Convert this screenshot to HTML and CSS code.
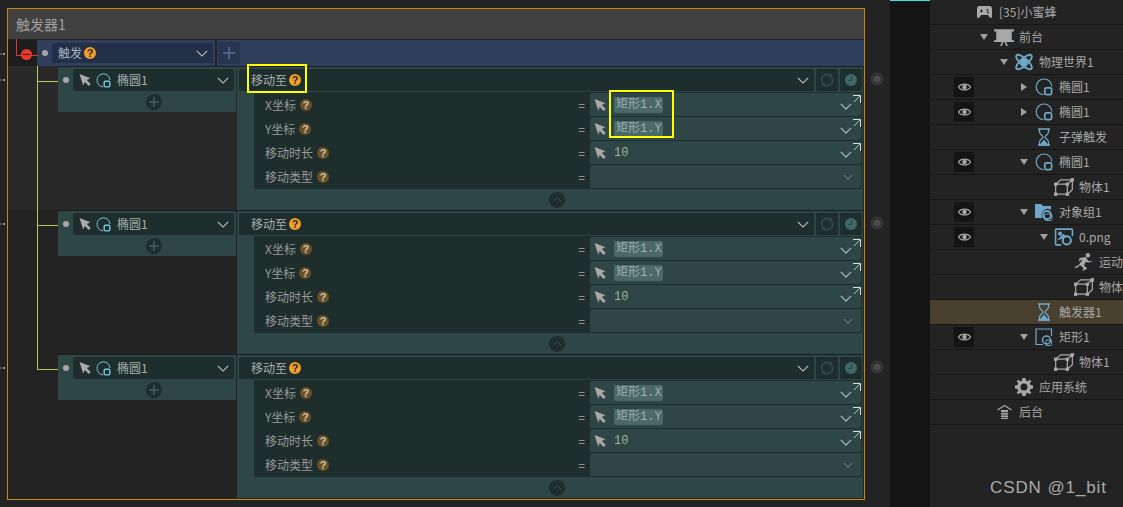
FILE: index.html
```html
<!DOCTYPE html>
<html lang="zh">
<head>
<meta charset="utf-8">
<title>触发器1</title>
<link rel="stylesheet" href="styles.css">
</head>
<body>
<svg class="defs" width="0" height="0" aria-hidden="true">
  <symbol id="cursor" viewBox="0 0 14 14"><path d="M1.5 1 12.5 5.2 8.8 6.9 12.8 11 10.8 13 6.8 8.9 5.2 12.5Z" fill="currentColor"/></symbol>
  <symbol id="chev" viewBox="0 0 14 8"><path d="M1 1 7 7 13 1" fill="none" stroke="currentColor" stroke-width="1.2"/></symbol>
  <symbol id="ellipse" viewBox="0 0 18 18"><path d="M8.5 16.6A7.8 7.8 0 1 1 16.8 8.5" fill="none" stroke="currentColor" stroke-width="1.2"/><rect x="9.8" y="9.8" width="6.8" height="6.8" rx="1.6" fill="none" stroke="currentColor" stroke-width="1.7"/></symbol>
  <symbol id="plus" viewBox="0 0 12 12"><path d="M6 0V12M0 6H12" stroke="currentColor" stroke-width="2"/></symbol>
  <symbol id="expand" viewBox="0 0 8 8"><path d="M0 .5H7.5V8" fill="none" stroke="currentColor" stroke-width="1"/><path d="M7 1 1 7" stroke="currentColor" stroke-width="1" opacity=".8"/></symbol>
  <symbol id="loop" viewBox="0 0 14 14"><path d="M2 9A5.5 5.5 0 0 1 11 3M12 5A5.5 5.5 0 0 1 3 11" fill="none" stroke="currentColor" stroke-width="1.5"/><path d="M10 0 13 4 9 4.5ZM4 14 1 10 5 9.5Z" fill="currentColor"/></symbol>
  <symbol id="clock" viewBox="0 0 12 12"><circle cx="6" cy="6" r="6" fill="currentColor"/><path d="M6.500 2.500V6.500H3.500" fill="none" stroke="#2a4846" stroke-width="1.200"/></symbol>
  <symbol id="eye" viewBox="0 0 14 10"><path d="M.5 5C3 .8 11 .8 13.5 5 11 9.2 3 9.2.5 5Z" fill="none" stroke="currentColor" stroke-width="1.4"/><circle cx="7" cy="5" r="2.400" fill="currentColor"/></symbol>
  <symbol id="glass" viewBox="0 0 20 18"><g transform="translate(3)"><path d="M1 1H13M1 17H13" stroke="currentColor" stroke-width="1.600"/><path d="M2.500 1V4C2.500 6.500 6 7.500 6 9 6 10.500 2.500 11.500 2.500 14V17H11.500V14C11.500 11.500 8 10.500 8 9 8 7.500 11.500 6.500 11.500 4V1" fill="none" stroke="currentColor" stroke-width="1.300"/><path d="M3 16.500 7 11.500 11 16.500Z" fill="currentColor"/></g></symbol>
  <symbol id="cube" viewBox="0 0 18 16"><path d="M1.500 5.500H12V14.500H1.500ZM1.500 5.500 6 1.500H16.500V10.500L12 14.500M12 5.500 16.500 1.500" fill="none" stroke="currentColor" stroke-width="1.100"/><g fill="currentColor"><rect y="4" width="3" height="3"/><rect x="10.500" y="4" width="3" height="3"/><rect y="13" width="3" height="3"/><rect x="10.500" y="13" width="3" height="3"/><rect x="15" width="3" height="3"/></g></symbol>
  <symbol id="pad" viewBox="0 0 15 12"><path d="M2.500 0H12.500Q15 0 15 3V10.500Q15 12 13.500 12 12.500 12 11 9H4Q2.500 12 1.500 12 0 12 0 10.500V3Q0 0 2.500 0Z" fill="currentColor"/><path d="M3 5H6M4.500 3.500V6.500" stroke="#232323" stroke-width="1"/><circle cx="10.500" cy="4" r=".9" fill="#232323"/><circle cx="11" cy="6.500" r=".9" fill="#232323"/></symbol>
  <symbol id="stage" viewBox="0 0 18 16"><path d="M0 1H18V3H16V11H18V12.500H11L12.500 16H11L9.500 12.500H8.500L7 16H5.500L7 12.500H0V11H2V3H0Z" fill="currentColor"/></symbol>
  <symbol id="world" viewBox="0 0 18 18"><ellipse cx="9" cy="9" rx="10" ry="3.600" transform="rotate(42 9 9)" fill="none" stroke="currentColor" stroke-width="1.900"/><ellipse cx="9" cy="9" rx="10" ry="3.600" transform="rotate(-42 9 9)" fill="none" stroke="currentColor" stroke-width="1.900"/><circle cx="9" cy="9" r="3.500" fill="currentColor"/></symbol>
  <symbol id="group" viewBox="0 0 18 18"><path d="M0 1H6L8 3H16V7A6 6 0 0 0 7.500 15H0Z" fill="currentColor"/><circle cx="12" cy="12" r="4" fill="none" stroke="currentColor" stroke-width="1.800"/><rect x="9.500" y="11" width="7.500" height="6.500" rx="2" fill="none" stroke="currentColor" stroke-width="1"/></symbol>
  <symbol id="image" viewBox="0 0 17 16"><path d="M6 15H2Q1 15 1 14V2Q1 1 2 1H15Q16 1 16 2V7" fill="none" stroke="currentColor" stroke-width="1.400"/><circle cx="5" cy="5" r="1.800" fill="currentColor"/><path d="M2 11 8 5 11 8Z" fill="currentColor"/><circle cx="11" cy="11" r="3.600" fill="none" stroke="currentColor" stroke-width="1.800"/></symbol>
  <symbol id="run" viewBox="0 0 18 16"><circle cx="12.500" cy="2" r="2" fill="currentColor"/><path d="M5 4.500 10.500 3.500 13 7 17.500 7.500 13 8.500 10.500 8 9 11 12 14 7.500 16 8.500 13.500 5.500 11 2.500 13.500 0 13 4.500 10.500 7.500 6 5.500 6.500 4 8Z" fill="currentColor"/></symbol>
  <symbol id="rect" viewBox="0 0 18 18"><path d="M8 16.500H1V1H16.500V8" fill="none" stroke="currentColor" stroke-width="1.200"/><circle cx="11.500" cy="12" r="4" fill="none" stroke="currentColor" stroke-width="1.500"/><rect x="11" y="12" width="5.500" height="5.500" rx="1" fill="none" stroke="currentColor" stroke-width="1"/></symbol>
  <symbol id="gear" viewBox="0 0 18 18"><path d="M7.400 0H10.600L11 2.500 12.700 3.200 14.800 1.700 16.300 3.200 14.800 5.300 15.500 7 18 7.400V10.600L15.500 11 14.800 12.700 16.300 14.800 14.800 16.300 12.700 14.800 11 15.500 10.600 18H7.400L7 15.500 5.300 14.800 3.200 16.300 1.700 14.800 3.200 12.700 2.500 11 0 10.600V7.400L2.500 7 3.200 5.300 1.700 3.200 3.200 1.700 5.300 3.200 7 2.500ZM9 5.500A3.500 3.500 0 1 0 9 12.500 3.500 3.500 0 1 0 9 5.500Z" fill="currentColor" fill-rule="evenodd"/></symbol>
  <symbol id="back" viewBox="0 0 15 14"><path d="M.5 5 7.500.5 14.500 5" fill="none" stroke="currentColor" stroke-width="1.200"/><path d="M4 5H11V14H4Z" fill="currentColor"/><path d="M4 7.500H11M4 10H11M4 12.500H11" stroke="#232323" stroke-width=".8"/></symbol>
  <symbol id="knob" viewBox="0 0 14 14"><circle cx="7" cy="7" r="5.500" fill="none" stroke="#3c3c3c" stroke-width="1.500"/><circle cx="7" cy="7" r="3.800" fill="#4c4c4c"/></symbol>
</svg>

<div class="app">
  <main class="editor">
    <section class="panel">
      <header class="panel-head">触发器1</header>

      <div class="trigger-row">
        <div class="gutter"><span class="stop"></span></div>
        <div class="trigger-bar">
          <span class="dot"></span>
          <div class="select select-blue">
            <span class="txt">触发</span><span class="q">?</span>
            <svg class="chev"><use href="#chev"/></svg>
          </div>
          <span class="bar-sep"></span>
          <button class="add-blue"><svg class="plus"><use href="#plus"/></svg></button>
        </div>
      </div>

      <div class="action first">
        <div class="wire"></div>
        <div class="target">
          <div class="target-top">
            <span class="dot"></span>
            <div class="select">
              <svg class="cur"><use href="#cursor"/></svg>
              <svg class="ell"><use href="#ellipse"/></svg>
              <span class="txt">椭圆1</span>
              <svg class="chev"><use href="#chev"/></svg>
            </div>
          </div>
          <div class="round"><svg class="plus-s"><use href="#plus"/></svg></div>
        </div>
        <div class="body">
          <div class="body-head">
            <div class="select head-sel"><span class="txt">移动至</span><span class="q">?</span><svg class="chev"><use href="#chev"/></svg></div>
            <div class="tool"><svg class="ico-loop"><use href="#loop"/></svg></div>
            <div class="tool"><svg class="ico-clock"><use href="#clock"/></svg></div>
          </div>
          <div class="params">
            <div class="param"><span class="pname">X坐标</span><span class="q q-dim">?</span><span class="eq">=</span>
              <div class="field"><svg class="cur"><use href="#cursor"/></svg><span class="code">矩形1.X</span><svg class="chev"><use href="#chev"/></svg><svg class="expand"><use href="#expand"/></svg></div></div>
            <div class="param"><span class="pname">Y坐标</span><span class="q q-dim">?</span><span class="eq">=</span>
              <div class="field"><svg class="cur"><use href="#cursor"/></svg><span class="code">矩形1.Y</span><svg class="chev"><use href="#chev"/></svg><svg class="expand"><use href="#expand"/></svg></div></div>
            <div class="param"><span class="pname">移动时长</span><span class="q q-dim">?</span><span class="eq">=</span>
              <div class="field"><svg class="cur"><use href="#cursor"/></svg><span class="num">10</span><svg class="chev"><use href="#chev"/></svg><svg class="expand"><use href="#expand"/></svg></div></div>
            <div class="param"><span class="pname">移动类型</span><span class="q q-dim">?</span><span class="eq">=</span>
              <div class="field"><svg class="chev chev-s"><use href="#chev"/></svg></div></div>
          </div>
          <div class="collapse"><span class="round"><svg class="chev-up"><use href="#chev"/></svg></span></div>
        </div>
        <svg class="knob"><use href="#knob"/></svg>
        <span class="mark"></span>
        <span class="mark mark-top"></span>
      </div>

      <div class="action">
        <div class="wire"></div>
        <div class="target">
          <div class="target-top">
            <span class="dot"></span>
            <div class="select">
              <svg class="cur"><use href="#cursor"/></svg>
              <svg class="ell"><use href="#ellipse"/></svg>
              <span class="txt">椭圆1</span>
              <svg class="chev"><use href="#chev"/></svg>
            </div>
          </div>
          <div class="round"><svg class="plus-s"><use href="#plus"/></svg></div>
        </div>
        <div class="body">
          <div class="body-head">
            <div class="select head-sel"><span class="txt">移动至</span><span class="q">?</span><svg class="chev"><use href="#chev"/></svg></div>
            <div class="tool"><svg class="ico-loop"><use href="#loop"/></svg></div>
            <div class="tool"><svg class="ico-clock"><use href="#clock"/></svg></div>
          </div>
          <div class="params">
            <div class="param"><span class="pname">X坐标</span><span class="q q-dim">?</span><span class="eq">=</span>
              <div class="field"><svg class="cur"><use href="#cursor"/></svg><span class="code">矩形1.X</span><svg class="chev"><use href="#chev"/></svg><svg class="expand"><use href="#expand"/></svg></div></div>
            <div class="param"><span class="pname">Y坐标</span><span class="q q-dim">?</span><span class="eq">=</span>
              <div class="field"><svg class="cur"><use href="#cursor"/></svg><span class="code">矩形1.Y</span><svg class="chev"><use href="#chev"/></svg><svg class="expand"><use href="#expand"/></svg></div></div>
            <div class="param"><span class="pname">移动时长</span><span class="q q-dim">?</span><span class="eq">=</span>
              <div class="field"><svg class="cur"><use href="#cursor"/></svg><span class="num">10</span><svg class="chev"><use href="#chev"/></svg><svg class="expand"><use href="#expand"/></svg></div></div>
            <div class="param"><span class="pname">移动类型</span><span class="q q-dim">?</span><span class="eq">=</span>
              <div class="field"><svg class="chev chev-s"><use href="#chev"/></svg></div></div>
          </div>
          <div class="collapse"><span class="round"><svg class="chev-up"><use href="#chev"/></svg></span></div>
        </div>
        <svg class="knob"><use href="#knob"/></svg>
        <span class="mark"></span>
      </div>

      <div class="action">
        <div class="wire"></div>
        <div class="target">
          <div class="target-top">
            <span class="dot"></span>
            <div class="select">
              <svg class="cur"><use href="#cursor"/></svg>
              <svg class="ell"><use href="#ellipse"/></svg>
              <span class="txt">椭圆1</span>
              <svg class="chev"><use href="#chev"/></svg>
            </div>
          </div>
          <div class="round"><svg class="plus-s"><use href="#plus"/></svg></div>
        </div>
        <div class="body">
          <div class="body-head">
            <div class="select head-sel"><span class="txt">移动至</span><span class="q">?</span><svg class="chev"><use href="#chev"/></svg></div>
            <div class="tool"><svg class="ico-loop"><use href="#loop"/></svg></div>
            <div class="tool"><svg class="ico-clock"><use href="#clock"/></svg></div>
          </div>
          <div class="params">
            <div class="param"><span class="pname">X坐标</span><span class="q q-dim">?</span><span class="eq">=</span>
              <div class="field"><svg class="cur"><use href="#cursor"/></svg><span class="code">矩形1.X</span><svg class="chev"><use href="#chev"/></svg><svg class="expand"><use href="#expand"/></svg></div></div>
            <div class="param"><span class="pname">Y坐标</span><span class="q q-dim">?</span><span class="eq">=</span>
              <div class="field"><svg class="cur"><use href="#cursor"/></svg><span class="code">矩形1.Y</span><svg class="chev"><use href="#chev"/></svg><svg class="expand"><use href="#expand"/></svg></div></div>
            <div class="param"><span class="pname">移动时长</span><span class="q q-dim">?</span><span class="eq">=</span>
              <div class="field"><svg class="cur"><use href="#cursor"/></svg><span class="num">10</span><svg class="chev"><use href="#chev"/></svg><svg class="expand"><use href="#expand"/></svg></div></div>
            <div class="param"><span class="pname">移动类型</span><span class="q q-dim">?</span><span class="eq">=</span>
              <div class="field"><svg class="chev chev-s"><use href="#chev"/></svg></div></div>
          </div>
          <div class="collapse"><span class="round"><svg class="chev-up"><use href="#chev"/></svg></span></div>
        </div>
        <svg class="knob"><use href="#knob"/></svg>
        <span class="mark"></span>
      </div>

      <div class="hl hl-a"></div>
      <div class="hl hl-b"></div>
    </section>
  </main>

  <div class="strip"></div>

  <aside class="tree">
    <div class="row l0"><svg class="ic pad"><use href="#pad"/></svg><span>[35]小蜜蜂</span></div>
    <div class="row l1"><i class="arrow down"></i><svg class="ic grey"><use href="#stage"/></svg><span>前台</span></div>
    <div class="row l2"><i class="arrow down"></i><svg class="ic blue"><use href="#world"/></svg><span>物理世界1</span></div>
    <div class="row l3"><b class="eyebox"><svg class="eye"><use href="#eye"/></svg></b><i class="arrow right"></i><svg class="ic blue"><use href="#ellipse"/></svg><span>椭圆1</span></div>
    <div class="row l3"><b class="eyebox"><svg class="eye"><use href="#eye"/></svg></b><i class="arrow right"></i><svg class="ic blue"><use href="#ellipse"/></svg><span>椭圆1</span></div>
    <div class="row l3"><i class="arrow"></i><svg class="ic blue"><use href="#glass"/></svg><span>子弹触发</span></div>
    <div class="row l3"><b class="eyebox"><svg class="eye"><use href="#eye"/></svg></b><i class="arrow down"></i><svg class="ic blue"><use href="#ellipse"/></svg><span>椭圆1</span></div>
    <div class="row l4"><i class="arrow"></i><svg class="ic grey"><use href="#cube"/></svg><span>物体1</span></div>
    <div class="row l3"><b class="eyebox"><svg class="eye"><use href="#eye"/></svg></b><i class="arrow down"></i><svg class="ic blue"><use href="#group"/></svg><span>对象组1</span></div>
    <div class="row l4"><b class="eyebox"><svg class="eye"><use href="#eye"/></svg></b><i class="arrow down"></i><svg class="ic blue"><use href="#image"/></svg><span>0.png</span></div>
    <div class="row l5"><i class="arrow"></i><svg class="ic grey"><use href="#run"/></svg><span>运动</span></div>
    <div class="row l5"><i class="arrow"></i><svg class="ic grey"><use href="#cube"/></svg><span>物体</span></div>
    <div class="row l3 selected"><i class="arrow"></i><svg class="ic blue"><use href="#glass"/></svg><span>触发器1</span></div>
    <div class="row l3"><b class="eyebox"><svg class="eye"><use href="#eye"/></svg></b><i class="arrow down"></i><svg class="ic blue"><use href="#rect"/></svg><span>矩形1</span></div>
    <div class="row l4"><i class="arrow"></i><svg class="ic grey"><use href="#cube"/></svg><span>物体1</span></div>
    <div class="row l2"><i class="arrow"></i><svg class="ic grey"><use href="#gear"/></svg><span>应用系统</span></div>
    <div class="row l1"><i class="arrow"></i><svg class="ic grey back"><use href="#back"/></svg><span>后台</span></div>
    <div class="watermark">CSDN @1_bit</div>
  </aside>
</div>
</body>
</html>
```

FILE: styles.css
```css
* { box-sizing: border-box; }
html, body { margin: 0; height: 100%; overflow: hidden; }
body {
  background: #232323;
  color: #a8a8a8;
  font: 12px/16px "Noto Sans CJK SC", "Liberation Sans", sans-serif;
}
.defs { position: absolute; }
svg { display: block; flex: none; }

.app { display: flex; width: 1123px; height: 507px; }
.editor { width: 890px; flex: none; padding: 8px 0 0 7px; }
.strip { width: 40px; flex: none; background: #141414; border-top: 1px solid #35e5e5; }

/* panel */
.panel {
  position: relative;
  width: 858px;
  height: 492px;
  border: 1px solid #c98a12;
  background: #232323;
}
.panel-head {
  height: 31px;
  background: #404040;
  padding-left: 8px;
  font-size: 14px;
  line-height: 30px;
  color: #a0a0a0;
  border-bottom: 1px solid #222;
}
.trigger-row { display: flex; height: 26px; }
.gutter { width: 29px; background: #1d1d1d; position: relative; }
.gutter::before {
  content: ""; position: absolute; left: 8px; top: -1px; width: 21px; height: 16px;
  border-left: 1px solid #e0352b; border-bottom: 1px solid #e0352b;
}
.stop {
  position: absolute; left: 13px; top: 9px; width: 11px; height: 11px; border-radius: 50%;
  background: #e8392b; z-index: 1;
}
.stop::after { content: ""; position: absolute; left: 2px; top: 5px; width: 7px; height: 1px; background: #4a1510; }
.trigger-bar { flex: 1; display: flex; align-items: center; background: #2f3f5c; padding-right: 1px; }
.trigger-bar .dot { margin: 0 4px 0 5px; }
.select {
  display: flex; align-items: center; height: 22px; background: #1e2e2d; border-radius: 2px; color: #a8a8a8;
}
.select .chev { margin-left: auto; margin-right: 5px; }
.select-blue { background: #232f46; width: 161px; height: 20px; padding-left: 6px; color: #a9b2c2; }
.bar-sep { width: 2px; height: 26px; margin: 0 1px 0 2px; background: #232323; }
.add-blue {
  width: 22px; height: 22px; padding: 0; border: 0; border-radius: 2px; background: #27354f; color: #4a638b;
  display: flex; align-items: center; justify-content: center;
}
.plus { width: 12px; height: 12px; }
.dot { width: 6px; height: 6px; border-radius: 50%; background: #a8a8a8; flex: none; }
.chev { width: 12px; height: 7px; color: #c8c8c8; }
.q {
  width: 12px; height: 12px; border-radius: 50%; background: #f0a030; color: #3a2a12; flex: none;
  font: bold 11px/12px "Liberation Sans", sans-serif; text-align: center; margin-left: 2px;
}
.q-dim { background: #6a4f26; color: #cfc3ac; margin-left: 4px; }

/* action */
.action { position: relative; display: flex; height: 144px; padding: 1px 0 0 50px; }
.action.first { background: #292929; }
.wire {
  position: absolute; left: 29px; top: -144px; width: 21px; height: 160px; z-index: 1;
  border-left: 1px solid #b7cc5c; border-bottom: 1px solid #b7cc5c;
}
.first .wire { top: 0; height: 16px; }
.target { width: 178px; height: 45px; background: #2e4645; flex: none; box-shadow: 0 -1px 0 #1b1b1b; }
.target-top { display: flex; align-items: center; height: 24px; padding-top: 2px; }
.target-top .dot { margin: 0 4px 0 5px; }
.target .select { width: 161px; }
.cur { width: 14px; height: 14px; color: #a8a8a8; margin-left: 5px; }
.ell { width: 15px; height: 15px; margin-left: 4px; color: #7cc4e8; }
.select .txt { margin-left: 6px; color: #a8b0b0; }
.select-blue .txt { margin-left: 0; color: #a9b2c2; }
.round {
  display: block; width: 16px; height: 16px; border-radius: 50%; background: #1e2e2d; margin: 3px 0 0 88px;
  position: relative;
}
.plus-s { width: 10px; height: 10px; color: #3d5f5d; position: absolute; left: 3px; top: 3px; }
.body { margin-left: 1px; width: 626px; height: 143px; background: #2e4645; flex: none; padding-top: 2px; box-shadow: 0 -1px 0 #1b1b1b; }
.body-head { display: flex; gap: 2px; height: 23px; padding: 0 1px 0 2px; }
.head-sel { flex: 1; }
.head-sel .txt { margin-left: 12px; }
.tool { width: 22px; height: 22px; background: #1e2e2d; border-radius: 2px; display: flex; align-items: center; justify-content: center; }
.ico-loop { width: 14px; height: 14px; color: #2e4f4c; }
.ico-clock { width: 12px; height: 12px; color: #3d6a67; }
.params { margin: 0 1px 0 17px; background: #1e2e2d; height: 97px; padding-top: 1px; border-radius: 0 0 2px 2px; }
.param { display: flex; align-items: center; height: 24px; padding-left: 11px; color: #9a9a9a; }
.pname { line-height: 22px; }
.eq { margin-left: auto; margin-right: 5px; color: #a8a8a8; }
.field {
  position: relative; display: flex; align-items: center; align-self: flex-start; width: 271px; height: 23px;
  margin-right: 1px; background: #2e4645; border-radius: 2px;
}
.field .cur { margin-left: 3px; }
.field .chev { margin-left: auto; margin-right: 9px; margin-top: 3px; }
.chev-s { width: 10px; height: 6px; color: #8a9a98; }
.field .chev-s { margin-right: 8px; margin-top: 0; }
.expand { position: absolute; right: 0; top: 2px; width: 8px; height: 8px; color: #d8e0de; }
.code, .num { font-family: "Liberation Mono", "Noto Sans CJK SC", monospace; color: #a0aeac; margin: 1px 0 0 7px; }
.code { background: #4a6968; border-radius: 2px; padding: 0 1px 0 2px; height: 16px; }
.collapse { height: 21px; padding-top: 3px; }
.collapse .round { margin: 0 0 0 312px; }
.chev-up { width: 9px; height: 5px; color: #3d5f5d; transform: rotate(180deg); position: absolute; left: 3.500px; top: 5px; }
.knob { position: absolute; left: 862px; top: 6px; width: 14px; height: 14px; }
.mark { position: absolute; left: -5px; top: 13px; width: 2px; height: 2px; background: #999; box-shadow: -3px 0 0 #555; }
.mark-top { top: -13px; }

/* yellow notes */
.hl { position: absolute; border: 2px solid #ffff00; z-index: 3; }
.hl-a { left: 239px; top: 55px; width: 60px; height: 29px; }
.hl-b { left: 601px; top: 81px; width: 65px; height: 48px; }

/* tree */
.tree { position: relative; flex: 1; background: #232323; overflow: hidden; }
.row {
  position: relative; display: flex; align-items: center; height: 25px;
  border-bottom: 1px solid #161616; white-space: nowrap;
}
.row span { margin-left: 5px; }
.l0 { padding-left: 47px; }
.l1 { padding-left: 47px; }
.l2 { padding-left: 67px; }
.l3 { padding-left: 87px; }
.l4 { padding-left: 107px; }
.l5 { padding-left: 127px; }
.l0 span { margin-left: 7px; }
.arrow { width: 17px; height: 8px; flex: none; position: relative; }
.arrow.down::before {
  content: ""; position: absolute; left: 3px; top: 1px;
  border-left: 4px solid transparent; border-right: 4px solid transparent; border-top: 6px solid #a0a0a0;
}
.arrow.right::before {
  content: ""; position: absolute; left: 4px; top: 0;
  border-top: 4px solid transparent; border-bottom: 4px solid transparent; border-left: 6px solid #a0a0a0;
}
.ic { width: 20px; height: 18px; color: #a8a8a8; }
.ic.blue { color: #6fa8c8; }
.ic.pad { width: 15px; height: 12px; }
.ic.back { width: 15px; height: 14px; margin: 0 2px 0 3px; }
.selected { background: #4a4030; }
.eyebox {
  position: absolute; left: 24px; top: 2px; width: 20px; height: 20px; background: #141414;
  display: flex; align-items: center; justify-content: center;
}
.eye { width: 13px; height: 10px; color: #a8a8a8; }
.watermark {
  position: absolute; left: 60px; top: 477px;
  font: 17px/22px "Liberation Sans", sans-serif; color: #ababab; letter-spacing: .9px;
}
```
